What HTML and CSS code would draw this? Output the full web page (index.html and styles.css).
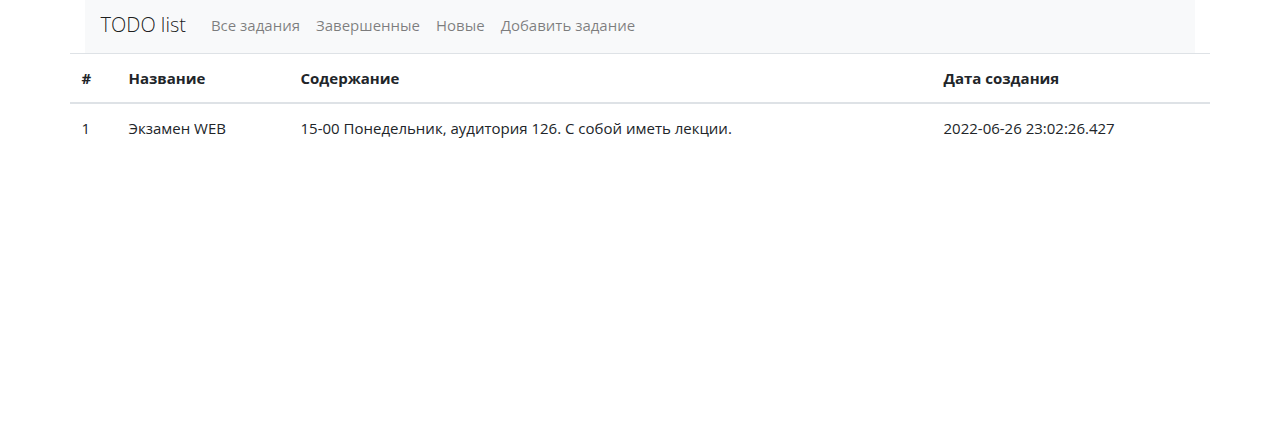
FILE: index.html
```html
<!DOCTYPE html>
<html lang="ru">
<head>
<meta charset="utf-8">
<title>TODO list</title>
<link rel="stylesheet" href="styles.css">
</head>
<body>
<div class="container">
  <nav class="navbar">
    <a class="brand" href="#">TODO list</a>
    <a class="nav-link" href="#">Все задания</a>
    <a class="nav-link" href="#">Завершенные</a>
    <a class="nav-link" href="#">Новые</a>
    <a class="nav-link" href="#">Добавить задание</a>
  </nav>
  <table class="table">
    <thead>
      <tr>
        <th class="c1">#</th>
        <th class="c2">Название</th>
        <th class="c3">Содержание</th>
        <th class="c4">Дата создания</th>
      </tr>
    </thead>
    <tbody>
      <tr>
        <td>1</td>
        <td>Экзамен WEB</td>
        <td>15-00 Понедельник, аудитория 126. С собой иметь лекции.</td>
        <td>2022-06-26 23:02:26.427</td>
      </tr>
    </tbody>
  </table>
</div>
</body>
</html>
```
FILE: styles.css
```css
* { box-sizing: border-box; }
body {
  margin: 0;
  font-family: "Open Sans", "Noto Sans", sans-serif;
  font-size: 15px;
  line-height: 24px;
  color: #212529;
  background: #fff;
}
.container {
  width: 1140px;
  margin: 0 auto;
}
.navbar {
  margin: 0 15px;
  height: 53px;
  background: #f8f9fa;
  display: flex;
  align-items: center;
  padding: 0 16px 4px;
}
.brand {
  font-size: 20px;
  color: rgba(0,0,0,.9);
  text-decoration: none;
  margin-right: 17px;
  line-height: 30px;
  font-weight: 300;
}
.nav-link {
  color: rgba(0,0,0,.5);
  text-decoration: none;
  padding: 0 8px;
}
.table {
  width: 100%;
  border-collapse: collapse;
  table-layout: fixed;
}
.table th, .table td {
  padding: 12px;
  text-align: left;
  vertical-align: top;
  border-top: 1px solid #dee2e6;
}
.table thead th {
  border-bottom: 2px solid #dee2e6;
  font-weight: 700;
}
.table tbody td { border-top: none; }
.c1 { width: 47px; }
.c2 { width: 172px; }
.c3 { width: 643px; }
```
